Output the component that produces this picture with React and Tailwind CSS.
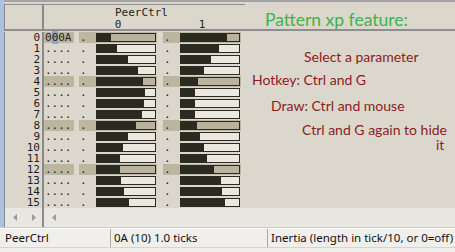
const col0 = [0.24, 0.35, 0.54, 0.71, 0.79, 0.83, 0.81, 0.77, 0.67, 0.54, 0.44, 0.39, 0.4, 0.41, 0.47, 0.56];
const col1 = [0.8, 0.66, 0.51, 0.4, 0.3, 0.24, 0.24, 0.24, 0.28, 0.32, 0.4, 0.45, 0.57, 0.69, 0.71, 0.76];

function Bar({ value, hi }) {
  return (
    <div className={`w-[60px] h-[9px] border border-[#2b2a20] flex ${hi ? 'bg-[#b9b29c]' : 'bg-[#ebe8df]'}`}>
      <div className="h-full bg-[#2b2a20]" style={{ width: `${Math.round(value * 58)}px` }} />
    </div>
  );
}

function EffectCell({ value, hi }) {
  return (
    <div className={`w-[78px] h-[11px] flex items-center ${hi ? 'bg-[#bcb59f]' : ''}`}>
      <span className="w-[17px] pl-[1px]">.</span>
      <Bar value={value} hi={hi} />
    </div>
  );
}

function Row({ i }) {
  const hi = i % 4 === 0;
  return (
    <div className="h-[11px] flex items-center leading-[11px]">
      <div className={`w-[30px] h-[11px] pl-[1px] ${hi ? 'bg-[#bcb59f]' : ''}`}>
        {i === 0 ? (
          <span>
            0<span className="bg-[#93a4c4]">0</span>0A
          </span>
        ) : (
          '....'
        )}
      </div>
      <div className="w-[5px]" />
      <EffectCell value={col0[i]} hi={hi} />
      <div className="w-[6px]" />
      <EffectCell value={col1[i]} hi={hi} />
    </div>
  );
}

function Arrow({ dir }) {
  return (
    <svg width="4" height="7" viewBox="0 0 4 7">
      {dir === 'left' ? <path d="M4 0 L0 3.5 L4 7 Z" fill="#9a9a9a" /> : <path d="M0 0 L4 3.5 L0 7 Z" fill="#9a9a9a" />}
    </svg>
  );
}

export default function App() {
  const rows = Array.from({ length: 16 }, (_, i) => i);
  const red = 'text-[#8b1c22] font-["Lato",sans-serif] text-[14px] leading-none';

  return (
    <div className="w-[455px] h-[252px] bg-[#dbd7cc] flex flex-col overflow-hidden">
      <div className="flex h-[227px]">
        <div className="w-[4px] bg-[#a9c1de]" />
        <div className="flex-1 flex flex-col">
          <div className="h-[2px] bg-[#a3a3a3]" />
          <div className="h-[2px]" />
          {/* header */}
          <div className="h-[25px] flex font-['DejaVu_Sans_Mono',monospace] text-[11px] text-[#1e1e1e]">
            <div className="w-[38px] border-l border-t border-[#8a8a8a]" />
            <div className="w-[2px] bg-[#8a8a8a]" />
            <div className="w-[201px] border-t border-[#8a8a8a]">
              <div className="pl-[71px] leading-[11px] pt-[2px]">PeerCtrl</div>
              <div className="flex leading-[11px] pt-[1px]">
                <div className="w-[35px]" />
                <div className="w-[78px] text-center">0</div>
                <div className="w-[6px]" />
                <div className="w-[78px] text-center">1</div>
              </div>
            </div>
            <div className="flex-1 pl-[20px] pt-[7px] text-[#3cb44e] font-['Lato',sans-serif] text-[17.5px] leading-none whitespace-nowrap">
              Pattern xp feature:
            </div>
          </div>
          <div className="h-[2px] bg-[#8e8e8e]" />
          {/* body */}
          <div className="flex h-[177px] pt-[1px] font-['DejaVu_Sans_Mono',monospace] text-[11px] text-[#1e1e1e]">
            <div className="w-[38px] border-l border-[#8a8a8a] pr-[2px] text-right">
              {rows.map((i) => (
                <div key={i} className="h-[11px] leading-[11px]">
                  {i}
                </div>
              ))}
            </div>
            <div className="w-[2px] bg-[#8a8a8a]" />
            <div className="w-[201px]">
              {rows.map((i) => (
                <Row key={i} i={i} />
              ))}
            </div>
            <div className="flex-1 flex flex-col whitespace-nowrap">
              <div className={`${red} pl-[59px] pt-[18px]`}>Select a parameter</div>
              <div className={`${red} pl-[7px] pt-[9px]`}>Hotkey: Ctrl and G</div>
              <div className={`${red} pl-[26px] pt-[12px]`}>Draw: Ctrl and mouse</div>
              <div className={`${red} pl-[57px] pt-[10px]`}>Ctrl and G again to hide</div>
              <div className={`${red} pl-[191px] pt-[1px]`}>it</div>
            </div>
          </div>
          {/* horizontal scroll row */}
          <div className="h-[19px] flex bg-[#e9e7e1]">
            <div className="w-[38px] border-l border-[#8a8a8a] flex items-center gap-[15px] pl-[8px]">
              <Arrow dir="left" />
              <Arrow dir="right" />
            </div>
            <div className="w-[2px] bg-[#8a8a8a]" />
            <div className="flex-1 flex items-center pl-[8px]">
              <Arrow dir="left" />
            </div>
          </div>
        </div>
      </div>
      {/* status bar */}
      <div className="h-[25px] bg-[#f0efec] border-t border-[#c9c9c9] flex flex-col font-['Noto_Sans',sans-serif] text-[11.5px] text-[#111]">
        <div className="h-[1px] bg-white" />
        <div className="h-[19px] flex items-center border-b border-[#d4d4d4]">
          <div className="w-[110px] pl-[5px] h-full flex items-center">PeerCtrl</div>
          <div className="w-[157px] pl-[3px] h-full flex items-center border-l border-[#a8a8a8]">0A (10) 1.0 ticks</div>
          <div className="flex-1 pl-[3px] h-full flex items-center border-l border-[#a8a8a8] whitespace-nowrap">
            Inertia (length in tick/10, or 0=off)
          </div>
        </div>
      </div>
    </div>
  );
}
